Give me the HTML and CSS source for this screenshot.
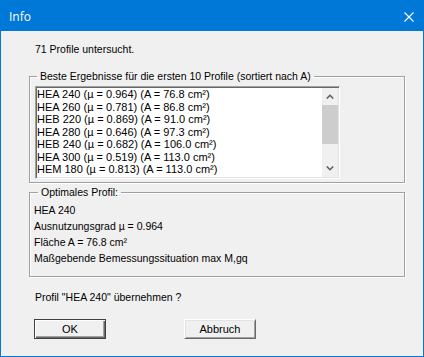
FILE: index.html
```html
<!DOCTYPE html>
<html>
<head>
  <title>Info</title>
  <meta charset="utf-8">
  <link rel="stylesheet" href="styles.css">
</head>
<body>
  <div class="window">
    <div class="titlebar">
      <span class="title">Info</span>
      <svg class="close" width="10" height="10" viewBox="0 0 10 10">
        <path d="M0.5 0.5 L9.5 9.5 M9.5 0.5 L0.5 9.5" stroke="#fff" stroke-width="1.1" fill="none"/>
      </svg>
    </div>

    <div class="content">
      <p class="count">71 Profile untersucht.</p>

      <fieldset class="group results">
        <legend>Beste Ergebnisse für die ersten 10 Profile (sortiert nach A)</legend>
        <div class="listbox">
          <ul class="items">
            <li>HEA 240 (µ = 0.964) (A = 76.8 cm²)</li>
            <li>HEA 260 (µ = 0.781) (A = 86.8 cm²)</li>
            <li>HEB 220 (µ = 0.869) (A = 91.0 cm²)</li>
            <li>HEA 280 (µ = 0.646) (A = 97.3 cm²)</li>
            <li>HEB 240 (µ = 0.682) (A = 106.0 cm²)</li>
            <li>HEA 300 (µ = 0.519) (A = 113.0 cm²)</li>
            <li>HEM 180 (µ = 0.813) (A = 113.0 cm²)</li>
          </ul>
          <div class="scrollbar">
            <div class="arrow">
              <svg width="8" height="5" viewBox="0 0 8 5"><polyline points="0.8,4.5 4,1.3 7.2,4.5" fill="none" stroke="#606060" stroke-width="1.6"/></svg>
            </div>
            <div class="track"><div class="thumb"></div></div>
            <div class="arrow">
              <svg width="8" height="5" viewBox="0 0 8 5"><polyline points="0.8,0.5 4,3.7 7.2,0.5" fill="none" stroke="#606060" stroke-width="1.6"/></svg>
            </div>
          </div>
        </div>
      </fieldset>

      <fieldset class="group optimum">
        <legend>Optimales Profil:</legend>
        <p>HEA 240</p>
        <p>Ausnutzungsgrad µ = 0.964</p>
        <p>Fläche A = 76.8 cm²</p>
        <p>Maßgebende Bemessungssituation max M,gq</p>
      </fieldset>

      <p class="question">Profil "HEA 240" übernehmen ?</p>

      <div class="buttons">
        <button class="btn default">OK</button>
        <button class="btn">Abbruch</button>
      </div>
    </div>
  </div>
</body>
</html>
```

FILE: styles.css
```css
* {
  margin: 0;
  padding: 0;
  box-sizing: border-box;
}

body {
  font-family: "Liberation Sans", Arial, sans-serif;
  font-size: 10.5px;
  color: #000;
  background: #f0f0f0;
}

.window {
  width: 424px;
  height: 357px;
  border: 1px solid #0078d7;
  background: #f0f0f0;
}

.titlebar {
  height: 30px;
  background: #0078d7;
  display: flex;
  align-items: center;
  justify-content: space-between;
  padding: 0 9px 0 8px;
}

.title {
  font-family: "Open Sans", "Noto Sans", sans-serif;
  font-size: 12px;
  color: #fff;
}

.close {
  display: block;
  margin-top: 1px;
}

.content {
  padding: 12px 18px 0 28px;
}

.count {
  line-height: 13px;
  margin-left: 6px;
}

.group {
  border: 1px solid #a0a0a0;
  box-shadow: inset 1px 1px #fff, 1px 1px #fff;
  min-width: 0;
}

.group legend {
  line-height: 13px;
  padding: 0 3px;
  margin-left: 2px;
}

.results {
  margin-top: 14px;
  padding: 3px 4px 3px 5px;
}

.optimum {
  margin-top: 3px;
  padding: 3px 4px 10px 4px;
}

.optimum legend {
  margin-left: 4px;
}

.optimum p {
  line-height: 16px;
}

.listbox {
  width: 305px;
  height: 93px;
  display: flex;
  padding: 1px;
  border: 1px solid;
  border-color: #a0a0a0 #fff #fff #a0a0a0;
  box-shadow: inset 1px 1px #696969, inset -1px -1px #e3e3e3;
  background: #fff;
}

.items {
  flex: 1;
  list-style: none;
  font-size: 11px;
  line-height: 12.5px;
  padding-left: 0;
  white-space: nowrap;
  overflow: hidden;
}

.scrollbar {
  width: 16px;
  display: flex;
  flex-direction: column;
  background: #f0f0f0;
}

.arrow {
  height: 17px;
  display: flex;
  align-items: center;
  justify-content: center;
}

.arrow svg {
  display: block;
}

.track {
  flex: 1;
}

.thumb {
  height: 39px;
  background: #cdcdcd;
}

.question {
  margin: 14px 0 0 6px;
  line-height: 13px;
}

.buttons {
  display: flex;
  gap: 78px;
  margin: 15px 0 0 5px;
}

.btn {
  width: 72px;
  height: 20px;
  font-family: "Liberation Sans", Arial, sans-serif;
  font-size: 11px;
  color: #000;
  background: #f0f0f0;
  border: 1px solid;
  border-color: #fff #696969 #696969 #fff;
  box-shadow: inset 1px 1px #e3e3e3, inset -1px -1px #a0a0a0;
}

.btn.default {
  border-color: #404040;
  box-shadow: inset 1px 1px #fff, inset -1px -1px #696969, inset -2px -2px #a0a0a0;
}
```
